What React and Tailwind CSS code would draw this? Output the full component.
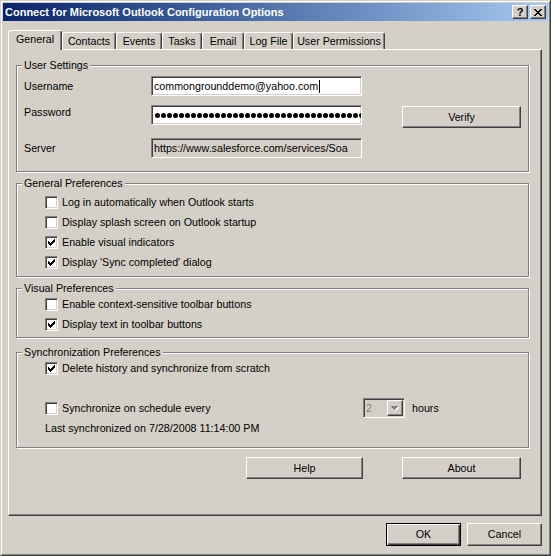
import React from 'react';

const raised =
  'border border-t-white border-l-white border-r-[#404040] border-b-[#404040] shadow-[inset_-1px_-1px_0_#808080]';
const sunken =
  'border border-t-[#808080] border-l-[#808080] border-r-white border-b-white shadow-[inset_1px_1px_0_#404040,inset_-1px_-1px_0_#d4d0c8]';

const Check = ({ checked }) => (
  <div className={`w-[13px] h-[13px] shrink-0 bg-white flex items-center justify-center ${sunken}`}>
    {checked && (
      <svg width="7" height="7" viewBox="0 0 7 7" shapeRendering="crispEdges">
        {[2, 3, 4, 3, 2, 1, 0].map((y, x) => (
          <rect key={x} x={x} y={y} width="1" height="3" fill="#000" />
        ))}
      </svg>
    )}
  </div>
);

const CheckRow = ({ checked, children }) => (
  <div className="flex items-center h-[13px] gap-[4px]">
    <Check checked={checked} />
    <span className="leading-[13px] whitespace-nowrap">{children}</span>
  </div>
);

const Group = ({ title, className, children }) => (
  <fieldset className={`border border-[#808080] shadow-[1px_1px_0_#fff,inset_1px_1px_0_#fff] ${className}`}>
    <legend className="ml-[5px] px-[2px] leading-[13px] bg-[#d4d0c8]">{title}</legend>
    {children}
  </fieldset>
);

const Button = ({ className, children }) => (
  <div className={`flex items-center justify-center bg-[#d4d0c8] ${raised} ${className}`}>{children}</div>
);

const tabs = [
  { label: 'General', w: 'w-[54px]', active: true },
  { label: 'Contacts', w: 'w-[54px]' },
  { label: 'Events', w: 'w-[46px]' },
  { label: 'Tasks', w: 'w-[40px]' },
  { label: 'Email', w: 'w-[42px]' },
  { label: 'Log File', w: 'w-[49px]' },
  { label: 'User Permissions', w: 'w-[92px]' },
];

const xRows = [
  [0, 6],
  [1, 5],
  [2, 4],
  [3, 3],
  [2, 4],
  [1, 5],
  [0, 6],
];

export default function App() {
  return (
    <div className="w-[551px] h-[556px] bg-[#d4d0c8] border border-t-[#d4d0c8] border-l-[#d4d0c8] border-r-[#404040] border-b-[#404040] font-['Liberation_Sans',Arial,sans-serif] text-[10.7px] text-black">
      <div className="h-full border border-t-white border-l-white border-r-[#808080] border-b-[#808080] p-px flex flex-col">
        {/* title bar */}
        <div className="h-[18px] shrink-0 flex items-center bg-linear-to-r from-[#0a246a] to-[#a6caf0] pl-[2px] pr-[2px]">
          <span className="text-white font-bold text-[11px] leading-[13px] whitespace-nowrap">
            Connect for Microsoft Outlook Configuration Options
          </span>
          <div className="ml-auto flex gap-[2px]">
            <Button className="w-[16px] h-[14px]">
              <span className="font-bold text-[11px] leading-[11px]">?</span>
            </Button>
            <Button className="w-[16px] h-[14px]">
              <svg width="8" height="7" viewBox="0 0 8 7" shapeRendering="crispEdges">
                {xRows.map(([a, b], r) => (
                  <g key={r} fill="#000">
                    <rect x={a} y={r} width="2" height="1" />
                    <rect x={b} y={r} width="2" height="1" />
                  </g>
                ))}
              </svg>
            </Button>
          </div>
        </div>

        {/* tabs */}
        <div className="flex items-end h-[19px] mt-[9px] ml-[5px]">
          {tabs.map((t) =>
            t.active ? (
              <div
                key={t.label}
                className={`relative -mb-px h-[20px] ${t.w} bg-[#d4d0c8] border-l border-t border-r border-l-white border-t-white border-r-[#404040] shadow-[inset_-1px_0_0_#808080] rounded-t-[3px] flex items-center justify-center pb-[2px]`}
              >
                {t.label}
              </div>
            ) : (
              <div
                key={t.label}
                className={`h-[17px] ${t.w} border-l border-t border-r border-l-white border-t-white border-r-[#404040] shadow-[inset_-1px_0_0_#808080] rounded-t-[3px] flex items-center justify-center`}
              >
                {t.label}
              </div>
            )
          )}
        </div>

        {/* panel */}
        <div className={`ml-[5px] w-[534px] h-[467px] shrink-0 pl-[7px] pr-[12px] pt-[9px] ${raised}`}>
          <Group title="User Settings" className="h-[113px]">
            <div className="pl-[7px] pt-[4px]">
              <div className="flex items-center h-[20px]">
                <span className="w-[127px]">Username</span>
                <div className={`w-[211px] h-[20px] bg-white flex items-center pl-[2px] ${sunken}`}>
                  <span className="whitespace-nowrap">commongrounddemo@yahoo.com</span>
                  <span className="w-px h-[13px] bg-black ml-px" />
                </div>
              </div>
              <div className="flex items-start h-[20px] mt-[9px]">
                <span className="w-[127px] leading-[13px] mt-[1px]">Password</span>
                <div className={`w-[211px] h-[20px] bg-white flex items-center gap-[1px] pl-[3px] overflow-hidden ${sunken}`}>
                  {Array.from({ length: 40 }).map((_, i) => (
                    <span key={i} className="w-[5px] h-[5px] shrink-0 rounded-full bg-black" />
                  ))}
                </div>
                <Button className="ml-[40px] mt-[1px] w-[119px] h-[22px]">Verify</Button>
              </div>
              <div className="flex items-center h-[20px] mt-[13px]">
                <span className="w-[127px]">Server</span>
                <div className={`w-[211px] h-[20px] bg-[#d4d0c8] flex items-center pl-[2px] overflow-hidden ${sunken}`}>
                  <span className="whitespace-nowrap">https://www.salesforce.com/services/Soa</span>
                </div>
              </div>
            </div>
          </Group>

          <Group title="General Preferences" className="h-[100px] mt-[5px]">
            <div className="pl-[28px] pt-[6px] flex flex-col gap-[7px]">
              <CheckRow>Log in automatically when Outlook starts</CheckRow>
              <CheckRow>Display splash screen on Outlook startup</CheckRow>
              <CheckRow checked>Enable visual indicators</CheckRow>
              <CheckRow checked>Display 'Sync completed' dialog</CheckRow>
            </div>
          </Group>

          <Group title="Visual Preferences" className="h-[56px] mt-[5px]">
            <div className="pl-[28px] pt-[3px] flex flex-col gap-[7px]">
              <CheckRow>Enable context-sensitive toolbar buttons</CheckRow>
              <CheckRow checked>Display text in toolbar buttons</CheckRow>
            </div>
          </Group>

          <Group title="Synchronization Preferences" className="h-[102px] mt-[8px]">
            <div className="pl-[28px] pt-[3px]">
              <CheckRow checked>Delete history and synchronize from scratch</CheckRow>
              <div className="flex items-center h-[20px] mt-[23px]">
                <div className="w-[318px]">
                  <CheckRow>Synchronize on schedule every</CheckRow>
                </div>
                <div className={`w-[42px] h-[20px] bg-[#d4d0c8] flex items-center p-px ${sunken}`}>
                  <span className="pl-[1px] text-[#808080]">2</span>
                  <div className={`ml-auto w-[16px] h-[16px] flex items-center justify-center ${raised}`}>
                    <svg width="8" height="5" viewBox="0 0 8 5" shapeRendering="crispEdges">
                      <path d="M1 1h7v1h-1v1h-1v1h-1v1h-1v-1h-1v-1h-1v-1h-1z" fill="#fff" />
                      <path d="M0 0h7v1h-1v1h-1v1h-1v1h-1v-1h-1v-1h-1v-1h-1z" fill="#808080" />
                    </svg>
                  </div>
                </div>
                <span className="ml-[7px]">hours</span>
              </div>
              <div className="mt-[4px] leading-[13px]">Last synchronized on 7/28/2008 11:14:00 PM</div>
            </div>
          </Group>

          <div className="flex mt-[9px]">
            <Button className="ml-[230px] w-[117px] h-[22px]">Help</Button>
            <Button className="ml-[39px] w-[119px] h-[22px]">About</Button>
          </div>
        </div>

        {/* dialog buttons */}
        <div className="flex justify-end gap-[6px] pr-[6px] mt-[7px]">
          <div className="w-[75px] h-[23px] border border-black shadow-[inset_1px_1px_0_#fff,inset_-1px_-1px_0_#404040,inset_-2px_-2px_0_#808080] flex items-center justify-center">
            OK
          </div>
          <Button className="w-[75px] h-[23px]">Cancel</Button>
        </div>
      </div>
    </div>
  );
}
